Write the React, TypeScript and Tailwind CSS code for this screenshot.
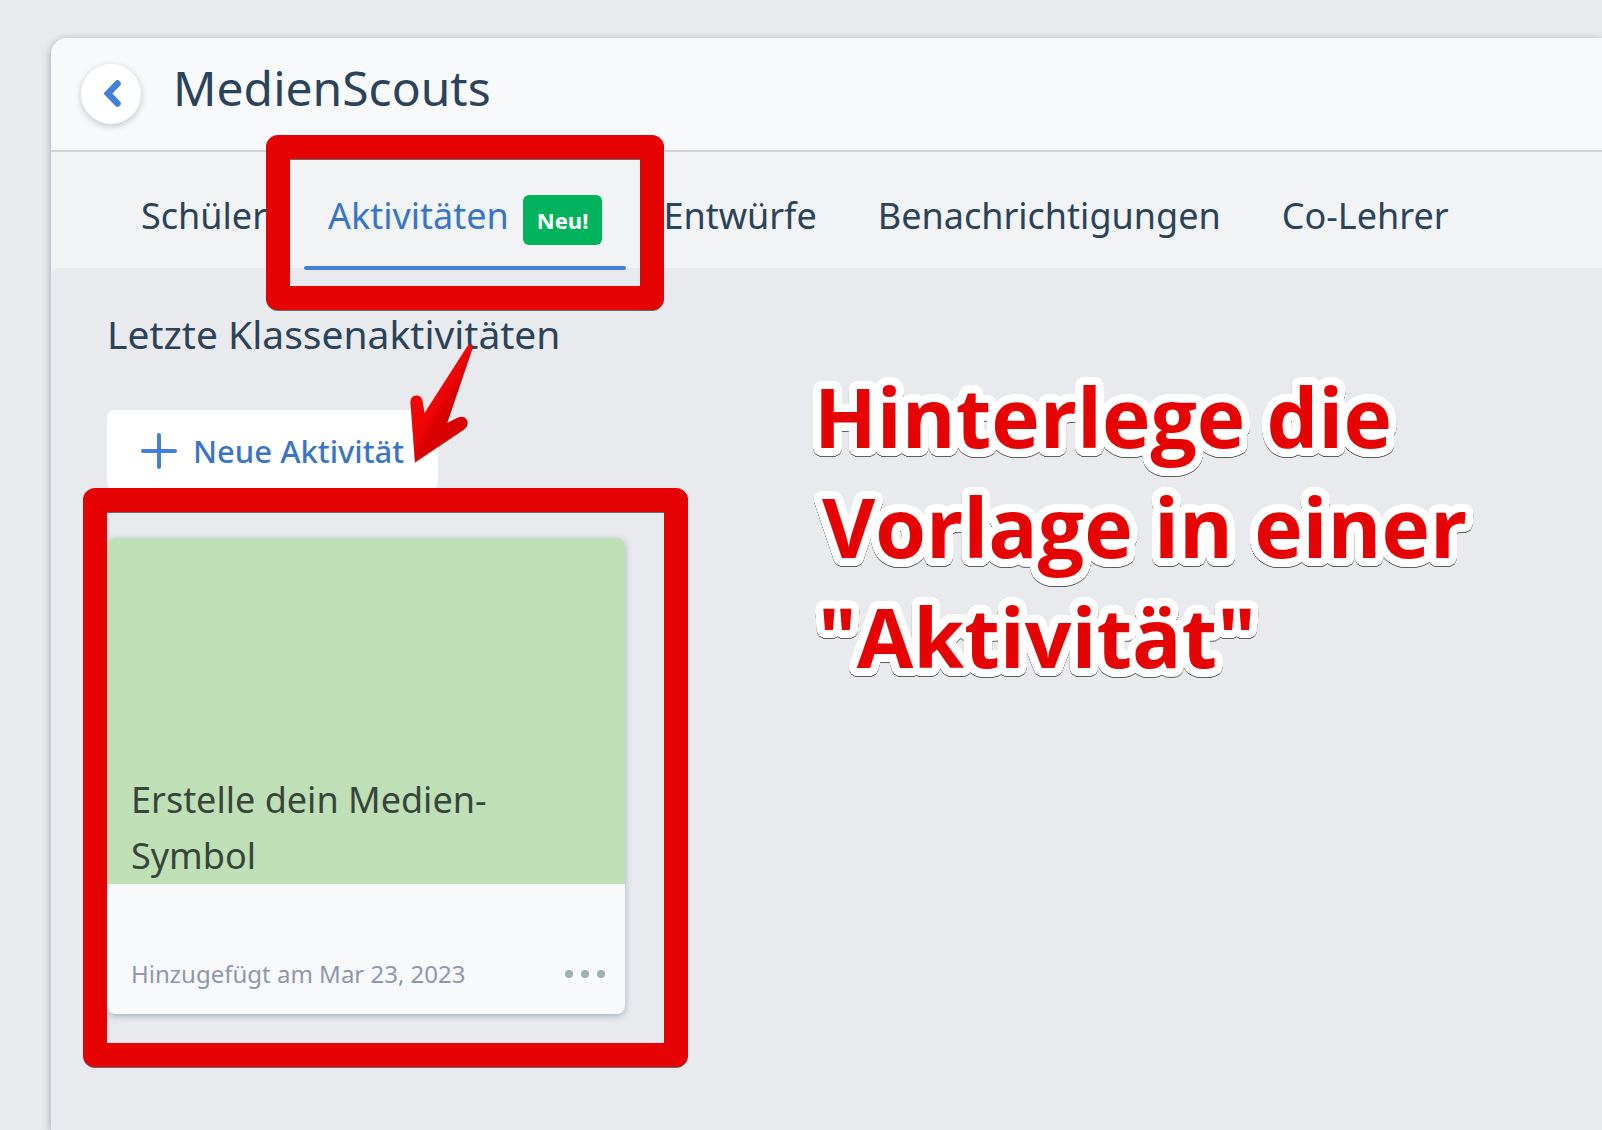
import React from "react";

const tabs = [
  { label: "Schüler" },
  { label: "Aktivitäten", badge: "Neu!", active: true },
  { label: "Entwürfe" },
  { label: "Benachrichtigungen" },
  { label: "Co-Lehrer" },
];

/** Solid round outline around text, built from a ring of hard shadows. */
function ring(radius: number, color: string, steps: number) {
  return Array.from({ length: steps }, (_, i) => {
    const a = (i / steps) * Math.PI * 2;
    return `${(Math.cos(a) * radius).toFixed(1)}px ${(Math.sin(a) * radius).toFixed(1)}px 0 ${color}`;
  }).join(", ");
}

const outline = `${ring(8, "#fff", 48)}, ${ring(4, "#fff", 16)}`;

function Highlight({ className }: { className: string }) {
  return (
    <span
      aria-hidden="true"
      className={`pointer-events-none absolute z-10 rounded-xl border-24 border-[#e60303] drop-shadow-[0_1px_0_rgba(40,50,60,0.7)] ${className}`}
    />
  );
}

function Arrow() {
  return (
    <svg
      aria-hidden="true"
      viewBox="0 0 64 120"
      className="pointer-events-none absolute -top-[66px] left-[303px] z-20 h-[120px] w-16 drop-shadow-[0_1px_0_rgba(60,0,0,0.5)]"
    >
      <defs>
        <linearGradient id="arrow" gradientUnits="userSpaceOnUse" x1="18" y1="60" x2="40" y2="73">
          <stop offset="0" stopColor="#f20505" />
          <stop offset="0.35" stopColor="#ee0404" />
          <stop offset="0.7" stopColor="#d90000" />
          <stop offset="1" stopColor="#d90000" />
        </linearGradient>
      </defs>
      <path
        fill="url(#arrow)"
        d="M57.500 2 Q59 0 61 0.500 Q63 1.500 62.500 4 L37 79 L48 73.500 Q54 71 57 76 Q59 81 54 85 L5 118 L0.500 58 Q0.500 51.500 6.500 51.500 Q11.500 51.500 12.500 57 L14.500 69 Z"
      />
    </svg>
  );
}

export default function App() {
  return (
    <div className="flex min-h-screen flex-col overflow-hidden bg-[#e8eaed] pl-[51px] pt-[38px] font-['Noto_Sans','Open_Sans',sans-serif] text-[#2b425b]">
      <div className="flex flex-1 flex-col rounded-tl-2xl bg-[#f1f3f5] shadow-[0_2px_8px_rgba(90,120,145,0.6)]">
        <header className="flex h-[114px] items-center gap-8 rounded-tl-2xl border-b-2 border-[#cdd4da] bg-[#f7f9fb] pl-[30px]">
          <button
            type="button"
            aria-label="Zurück"
            className="flex size-[60px] items-center justify-center rounded-full bg-white shadow-[0_2px_6px_rgba(90,120,145,0.4)]"
          >
            <svg viewBox="0 0 20 30" className="h-[30px] w-5" aria-hidden="true">
              <path
                d="M16.500 4.500 L7 14.500 L16.500 24.500"
                fill="none"
                stroke="#437fdb"
                strokeWidth="6.500"
                strokeLinecap="round"
              />
            </svg>
          </button>
          <h1 className="pb-3 text-[48px] leading-[56px]">MedienScouts</h1>
        </header>

        <nav className="flex h-[116px] gap-[13px] pl-[66px]">
          {tabs.map((tab) => (
            <div key={tab.label} className="relative flex">
              <a
                href="#"
                aria-current={tab.active ? "page" : undefined}
                className={
                  tab.active
                    ? "flex items-baseline gap-[14px] px-6 pt-10 text-4xl leading-[48px] text-[#3875c8]"
                    : "flex items-baseline px-6 pt-10 text-4xl leading-[48px]"
                }
              >
                {tab.label}
                {tab.badge && (
                  <span className="rounded-md bg-[#00b35c] px-[14px] text-[22px] leading-[50px] font-bold text-white">
                    {tab.badge}
                  </span>
                )}
              </a>
              {tab.active && (
                <>
                  <span className="absolute inset-x-0 -bottom-0.5 z-10 h-1 rounded-full bg-[#437fdb]" />
                  <Highlight className="-inset-x-[38px] -top-[17px] -bottom-[42px]" />
                </>
              )}
            </div>
          ))}
        </nav>

        <main className="flex flex-1 items-start rounded-tl-lg bg-[#e8eaed] pl-14">
          <section className="w-[518px] shrink-0 pt-[42px] pb-16">
            <h2 className="text-[39px] leading-[48px]">Letzte Klassenaktivitäten</h2>

            <div className="relative mt-[52px] w-fit">
              <button
                type="button"
                className="flex h-20 items-center gap-4 rounded-lg bg-white px-[34px] pt-0.5 text-[31px] font-medium text-[#3875c8]"
              >
                <svg viewBox="0 0 36 36" className="size-9" aria-hidden="true">
                  <path d="M18 2 V34 M2 18 H34" stroke="#437fdb" strokeWidth="4" strokeLinecap="round" />
                </svg>
                Neue Aktivität
              </button>
              <Arrow />
            </div>

            <article className="relative mt-12 rounded-lg bg-[#f7f9fb] shadow-[0_2px_6px_rgba(90,120,145,0.5)]">
              <div className="flex h-[346px] items-end rounded-t-lg bg-[#bfdfb6] px-6">
                <h3 className="text-4xl leading-[56px] text-[#37453a]">Erstelle dein Medien-Symbol</h3>
              </div>
              <div className="flex h-[130px] items-end justify-between pr-5 pb-5 pl-6">
                <p className="text-2xl leading-10 text-[#8d98ad]">Hinzugefügt am Mar 23, 2023</p>
                <button type="button" aria-label="Mehr" className="flex h-10 items-center gap-2">
                  <span className="size-2 rounded-full bg-[#9ab3b0]" />
                  <span className="size-2 rounded-full bg-[#9ab3b0]" />
                  <span className="size-2 rounded-full bg-[#9ab3b0]" />
                </button>
              </div>
              <Highlight className="-top-[50px] -right-[63px] -bottom-[53px] -left-6" />
            </article>
          </section>

          <p
            className="mt-[93px] ml-[189px] font-['Open_Sans','Noto_Sans',sans-serif] text-[82px] leading-[110px] font-bold whitespace-nowrap text-[#e60303] drop-shadow-[0_1px_0_rgba(0,0,0,0.6)]"
            style={{ textShadow: outline }}
          >
            <span className="block">Hinterlege die</span>
            <span className="block pl-2">Vorlage in einer</span>
            <span className="block pl-1">"Aktivität"</span>
          </p>
        </main>
      </div>
    </div>
  );
}
